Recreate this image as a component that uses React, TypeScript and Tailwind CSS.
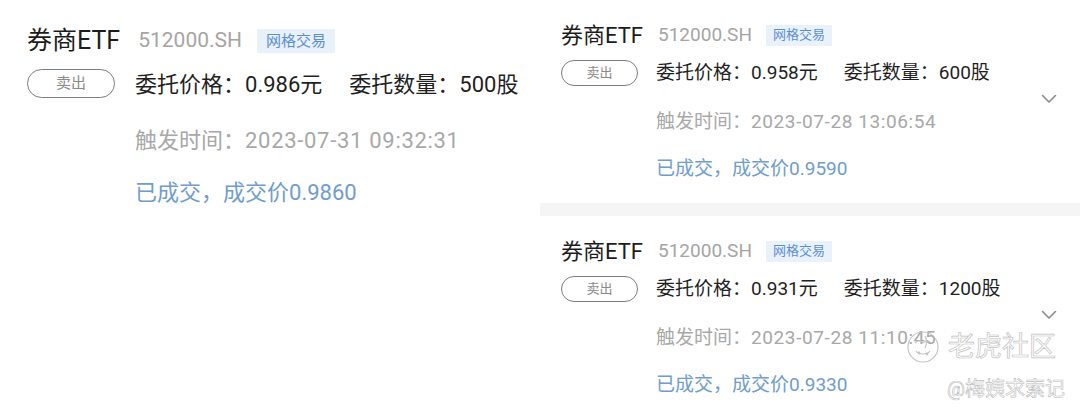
type Order = {
  price: string;
  qty: string;
  time: string;
  deal: string;
};

const LEFT: Order = { price: "0.986", qty: "500", time: "2023-07-31 09:32:31", deal: "0.9860" };
const RIGHT: Order[] = [
  { price: "0.958", qty: "600", time: "2023-07-28 13:06:54", deal: "0.9590" },
  { price: "0.931", qty: "1200", time: "2023-07-28 11:10:45", deal: "0.9330" },
];

function Chevron() {
  return (
    <svg width="16" height="10" viewBox="0 0 16 10" fill="none">
      <polyline points="1.5,1.5 8,8 14.5,1.5" stroke="#8a8a8a" strokeWidth="1.6" strokeLinecap="round" strokeLinejoin="round" />
    </svg>
  );
}

// big card on the left half
function BigCard({ o }: { o: Order }) {
  return (
    <div className="pl-[27px] pt-[25px]">
      <div className="flex items-center h-[32px]">
        <span className="text-[25px] text-[#1c1c1c]">券商ETF</span>
        <span className="ml-[18px] text-[21px] text-[#a5a5a5]">512000.SH</span>
        <span className="ml-[15px] h-[24px] px-[9px] flex items-center bg-[#e9f1fb] text-[15px] text-[#5b8fd4]">网格交易</span>
      </div>
      <div className="flex mt-[12px]">
        <div className="w-[88px] h-[29px] rounded-full border border-[#7d7d7d] flex items-center justify-center text-[15px] text-[#8a8a8a]">
          卖出
        </div>
        <div className="ml-[20px] flex flex-col">
          <div className="h-[30px] flex items-center text-[22px] text-[#1f1f1f]">
            <span>委托价格：{o.price}元</span>
            <span className="ml-[27px]">委托数量：{o.qty}股</span>
          </div>
          <div className="mt-[26px] h-[30px] flex items-center text-[22px] text-[#a8a8a8]">
            触发时间：<span className="tracking-[0.7px]">{o.time}</span>
          </div>
          <div className="mt-[22px] h-[30px] flex items-center text-[22px] text-[#6f9dcd]">已成交，成交价{o.deal}</div>
        </div>
      </div>
    </div>
  );
}

// smaller card on the right half
function SmallCard({ o }: { o: Order }) {
  return (
    <div className="flex items-center pl-[21px] pr-[23px] pt-[21px] pb-[21px]">
      <div className="flex-1">
        <div className="flex items-center h-[28px]">
          <span className="text-[22px] text-[#1c1c1c]">券商ETF</span>
          <span className="ml-[15px] text-[19px] text-[#a5a5a5]">512000.SH</span>
          <span className="ml-[14px] h-[21px] px-[7px] flex items-center bg-[#e9f1fb] text-[13px] text-[#5b8fd4]">网格交易</span>
        </div>
        <div className="flex mt-[11px]">
          <div className="w-[77px] h-[26px] rounded-full border border-[#7d7d7d] flex items-center justify-center text-[13px] text-[#8a8a8a]">
            卖出
          </div>
          <div className="ml-[18px] flex flex-col">
            <div className="h-[26px] flex items-center text-[19px] text-[#1f1f1f]">
              <span>委托价格：{o.price}元</span>
              <span className="ml-[26px]">委托数量：{o.qty}股</span>
            </div>
            <div className="mt-[23px] h-[26px] flex items-center text-[19px] text-[#a8a8a8]">
              触发时间：<span className="tracking-[0.6px]">{o.time}</span>
            </div>
            <div className="mt-[21px] h-[26px] flex items-center text-[19px] text-[#6f9dcd]">已成交，成交价{o.deal}</div>
          </div>
        </div>
      </div>
      <div className="mb-[6px]">
        <Chevron />
      </div>
    </div>
  );
}

function Watermark() {
  return (
    <div className="absolute left-[906px] top-[330px] pointer-events-none">
      <div className="flex items-center">
        <svg width="34" height="34" viewBox="0 0 34 34" fill="none" stroke="#c4c4c4" strokeWidth="1.2">
          <circle cx="17" cy="17" r="15" />
          <path d="M9 13c3-3 6-3 8 0M17 13c3-3 6-3 8 0" />
          <path d="M10 21c3 4 11 4 14 0" />
          <path d="M19 6c2 4 2 8 0 12" />
          <circle cx="13" cy="23" r="0.8" />
          <circle cx="21" cy="24" r="0.8" />
        </svg>
        <span className="ml-[8px] text-[27px] leading-[30px] text-white [-webkit-text-stroke:0.7px_#c2c2c2]">老虎社区</span>
      </div>
      <div className="mt-[14px] ml-[41px] text-[20px] leading-[22px] text-white [-webkit-text-stroke:0.6px_#bdbdbd]">
        @梅姨求索记
      </div>
    </div>
  );
}

export default function App() {
  return (
    <div className="relative w-[1080px] h-[413px] overflow-hidden bg-white font-['Roboto','Noto_Sans_CJK_SC',sans-serif]">
      <div className="flex">
        <div className="w-[540px]">
          <BigCard o={LEFT} />
        </div>
        <div className="w-[540px]">
          <SmallCard o={RIGHT[0]} />
          <div className="h-[13px] bg-[#f5f5f6]" />
          <SmallCard o={RIGHT[1]} />
        </div>
      </div>
      <Watermark />
    </div>
  );
}
